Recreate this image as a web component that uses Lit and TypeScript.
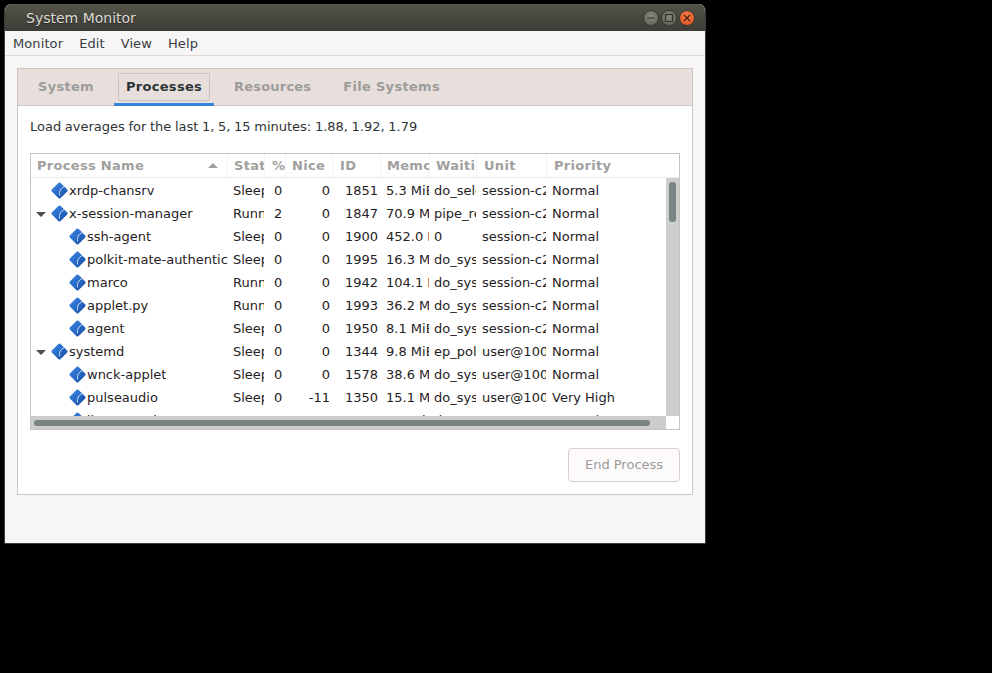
import { LitElement, html, css, svg } from 'lit';
import { customElement } from 'lit/decorators.js';

type Row = {
  name: string;
  level: number;
  open?: boolean;
  cells: string[];
};

const rows: Row[] = [
  { name: 'xrdp-chansrv', level: 0, cells: ['Sleeping', '0', '0', '1851', '5.3 MiB', 'do_select', 'session-c2.scope', 'Normal'] },
  { name: 'x-session-manager', level: 0, open: true, cells: ['Running', '2', '0', '1847', '70.9 MiB', 'pipe_read', 'session-c2.scope', 'Normal'] },
  { name: 'ssh-agent', level: 1, cells: ['Sleeping', '0', '0', '1900', '452.0 KiB', '0', 'session-c2.scope', 'Normal'] },
  { name: 'polkit-mate-authentication-agent-1', level: 1, cells: ['Sleeping', '0', '0', '1995', '16.3 MiB', 'do_sys_poll', 'session-c2.scope', 'Normal'] },
  { name: 'marco', level: 1, cells: ['Running', '0', '0', '1942', '104.1 MiB', 'do_sys_poll', 'session-c2.scope', 'Normal'] },
  { name: 'applet.py', level: 1, cells: ['Running', '0', '0', '1993', '36.2 MiB', 'do_sys_poll', 'session-c2.scope', 'Normal'] },
  { name: 'agent', level: 1, cells: ['Sleeping', '0', '0', '1950', '8.1 MiB', 'do_sys_poll', 'session-c2.scope', 'Normal'] },
  { name: 'systemd', level: 0, open: true, cells: ['Sleeping', '0', '0', '1344', '9.8 MiB', 'ep_poll', 'user@1000.service', 'Normal'] },
  { name: 'wnck-applet', level: 1, cells: ['Sleeping', '0', '0', '1578', '38.6 MiB', 'do_sys_poll', 'user@1000.service', 'Normal'] },
  { name: 'pulseaudio', level: 1, cells: ['Sleeping', '0', '-11', '1350', '15.1 MiB', 'do_sys_poll', 'user@1000.service', 'Very High'] },
  { name: 'ibus-portal', level: 1, cells: ['Running', '0', '0', '1600', '9.9 MiB', 'do_sys_poll', 'user@1000.service', 'Normal'] },
];

const headers = ['Stat', '%', 'Nice', 'ID', 'Memory', 'Waiting', 'Unit', 'Priority'];

const diamond = svg`<svg class="icon" width="17" height="17" viewBox="0 0 17 17">
  <defs>
    <linearGradient id="dia" x1="0" y1="0" x2="1" y2="1">
      <stop offset="0" stop-color="#3f8ae6"/>
      <stop offset="0.55" stop-color="#2667c4"/>
      <stop offset="1" stop-color="#174c9c"/>
    </linearGradient>
  </defs>
  <path d="M7.6 .8 Q8.5 0 9.4 .8 L16.2 7.6 Q17 8.5 16.2 9.4 L9.4 16.2 Q8.5 17 7.6 16.2 L.8 9.4 Q0 8.5 .8 7.6 Z" fill="url(#dia)"/>
  <path d="M13 4.8 C9.8 6 7.8 9.2 8.6 13.4" fill="none" stroke="#cfe0f6" stroke-width="1"/>
</svg>`;

@customElement('app-root')
export class AppRoot extends LitElement {
  static styles = css`
    :host {
      display: block;
      height: 673px;
      background: #000;
      font-family: 'DejaVu Sans', sans-serif;
      font-size: 13px;
      color: #2e3436;
      padding: 4px 0 0 4px;
      box-sizing: border-box;
    }
    .window {
      width: 702px;
      height: 540px;
      background: #f6f6f6;
      border-radius: 7px 7px 0 0;
      border: 1px solid #3c3c3c;
      border-top: none;
      overflow: hidden;
      display: flex;
      flex-direction: column;
      box-sizing: border-box;
    }
    .titlebar {
      height: 27px;
      flex: none;
      background: linear-gradient(#55544a, #3d3c36);
      display: flex;
      align-items: center;
      padding: 0 10px 0 21px;
      color: #dfdbd2;
      font-size: 14px;
      text-shadow: 0 1px 1px #222;
    }
    .title { flex: 1; }
    .wbtns { display: flex; gap: 2px; }
    .wbtn {
      width: 16px;
      height: 16px;
      box-sizing: border-box;
      border-radius: 50%;
      background: radial-gradient(circle at 50% 35%, #87877f, #5f5f58);
      border: 1px solid #3a3a34;
      display: flex;
      align-items: center;
      justify-content: center;
    }
    .wbtn.close { background: radial-gradient(circle at 50% 35%, #f47a48, #e0501d); }
    .menubar {
      height: 24px;
      flex: none;
      border-bottom: 1px solid #dcdad8;
      display: flex;
      align-items: center;
      padding: 0 8px;
      gap: 16px;
      font-size: 13px;
      letter-spacing: 0.1px;
      color: #3a3d3f;
    }
    .content {
      flex: 1;
      min-height: 0;
      padding: 12px 12px 48px;
      display: flex;
    }
    .notebook {
      flex: 1;
      border: 1px solid #cdc7c2;
      background: #fff;
      display: flex;
      flex-direction: column;
    }
    .tabs {
      height: 36px;
      flex: none;
      background: #e8dfdd;
      border-bottom: 1px solid #cdc7c2;
      display: flex;
      padding-left: 4px;
    }
    .tab {
      padding: 0 16px 2px;
      height: 36px;
      box-sizing: border-box;
      display: flex;
      align-items: center;
      font-weight: bold;
      font-size: 13px;
      letter-spacing: 0.3px;
      color: #9c9c9a;
      position: relative;
    }
    .tab:nth-child(3) { letter-spacing: 0.2px; }
    .tab.active { color: #2e3436; padding: 0 4px 2px; margin: 0 4px; }
    .tab.active span {
      border: 1px dotted #a8a8a6;
      border-radius: 2px;
      margin-top: 2px;
      padding: 4px 7px 5px;
      line-height: 17px;
    }
    .tab.active::after {
      content: '';
      position: absolute;
      left: 0;
      right: 0;
      bottom: -1px;
      height: 3px;
      background: #3584e4;
    }
    .page {
      flex: 1;
      padding: 13px 12px 12px;
      display: flex;
      flex-direction: column;
    }
    .load { height: 16px; line-height: 16px; color: #2e3436; font-size: 13px; word-spacing: -0.5px; }
    .tree {
      margin-top: 18px;
      height: 277px;
      flex: none;
      border: 1px solid #c8c4c0;
      display: grid;
      grid-template-columns: 1fr 13px;
      grid-template-rows: 24px 1fr 13px;
      box-sizing: border-box;
      overflow: hidden;
      background: #fff;
    }
    .list { overflow: hidden; min-width: 0; min-height: 0; }
    .cols {
      display: grid;
      grid-template-columns: 197px 37px 21px 47px 48px 49px 47px 70px 1fr;
    }
    .head {
      grid-column: 1 / -1;
      border-bottom: 1px solid #eeecea;
      box-sizing: border-box;
    }
    .head > div {
      font-weight: bold;
      font-size: 13px;
      letter-spacing: 0.3px;
      color: #a0a09e;
      line-height: 23px;
      padding-left: 6px;
      border-right: 1px solid #f4f3f2;
      overflow: hidden;
      white-space: nowrap;
      display: flex;
      justify-content: space-between;
      box-sizing: border-box;
    }
    .head > div:nth-child(3),
    .head > div:nth-child(5),
    .head > div:nth-child(8),
    .head > div:nth-child(9) { padding-left: 7px; }
    .head > div:last-child { border-right: none; }
    .sort { margin: 9px 9px 0 0; width: 0; height: 0; border: 5px solid transparent; border-top: 0; border-bottom: 5px solid #a0a09e; }
    .body { padding-top: 1px; }
    .row { height: 23px; line-height: 23px; color: #1f2224; white-space: nowrap; }
    .row > div { overflow: hidden; box-sizing: border-box; }
    .row .namecell { display: flex; align-items: center; padding-left: 1px; }
    .row .right { text-align: right; margin-right: 3px; }
    .row > .stat { padding-left: 5px; margin-right: 1px; }
    .row > .pctv { padding-left: 9px; }
    .row > .mem { padding-left: 5px; margin-right: 1px; }
    .row > .wait { padding-left: 4px; margin-right: 1px; }
    .row > .unit { padding-left: 5px; margin-right: 1px; }
    .row > .prio { padding-left: 5px; }
    .twist { width: 18px; flex: none; display: flex; justify-content: center; }
    .twist i { margin-top: 1px; width: 0; height: 0; border: 5px solid transparent; border-bottom: 0; border-top: 5px solid #4a4d4f; }
    .indent { width: 18px; flex: none; }
    .icon { flex: none; margin-left: 1px; }
    .name { margin-left: 1px; overflow: hidden; }
    .vscroll { background: #cdcdcd; display: flex; justify-content: center; padding-top: 4px; box-sizing: border-box; }
    .vscroll i { display: block; width: 7px; height: 40px; background: #7b8484; border-radius: 3px; }
    .hscroll { background: #cdcdcd; display: flex; align-items: center; padding-left: 3px; box-sizing: border-box; }
    .hscroll i { display: block; width: 616px; height: 6px; background: #7b8484; border-radius: 3px; }
    .corner { background: #fff; }
    .actions { display: flex; justify-content: flex-end; margin-top: 18px; }
    button {
      width: 112px;
      height: 34px;
      font: inherit;
      font-size: 13px;
      color: #9a9a98;
      background: #fdfafc;
      border: 1px solid #d8cfcc;
      border-radius: 4px;
      padding: 0 0 2px;
    }
  `;

  renderRow(r: Row) {
    const c = r.cells;
    return html`<div class="row cols">
      <div class="namecell">
        ${r.level ? html`<span class="indent"></span>` : ''}
        <span class="twist">${r.open ? html`<i></i>` : ''}</span>
        ${diamond}
        <span class="name">${r.name}</span>
      </div>
      <div class="stat">${c[0]}</div>
      <div class="pctv">${c[1]}</div>
      <div class="right">${c[2]}</div>
      <div class="right">${c[3]}</div>
      <div class="mem">${c[4]}</div>
      <div class="wait">${c[5]}</div>
      <div class="unit">${c[6]}</div>
      <div class="prio">${c[7]}</div>
    </div>`;
  }

  render() {
    return html`<div class="window">
      <div class="titlebar">
        <div class="title">System Monitor</div>
        <div class="wbtns">
          <div class="wbtn"><svg width="10" height="10" viewBox="0 0 10 10"><path d="M1.5 5h7" stroke="#33332e" stroke-width="1.2"/></svg></div>
          <div class="wbtn"><svg width="10" height="10" viewBox="0 0 10 10"><rect x="1.5" y="1.5" width="7" height="7" fill="none" stroke="#33332e" stroke-width="1.2"/></svg></div>
          <div class="wbtn close"><svg width="10" height="10" viewBox="0 0 10 10"><path d="M2 2l6 6M8 2l-6 6" stroke="#4a2412" stroke-width="1.3"/></svg></div>
        </div>
      </div>
      <div class="menubar">
        <span>Monitor</span><span>Edit</span><span>View</span><span>Help</span>
      </div>
      <div class="content">
        <div class="notebook">
          <div class="tabs">
            <div class="tab">System</div>
            <div class="tab active"><span>Processes</span></div>
            <div class="tab">Resources</div>
            <div class="tab">File Systems</div>
          </div>
          <div class="page">
            <div class="load">Load averages for the last 1, 5, 15 minutes: 1.88, 1.92, 1.79</div>
            <div class="tree">
              <div class="cols head">
                <div>Process Name<span class="sort"></span></div>
                ${headers.map((h) => html`<div>${h}</div>`)}
              </div>
              <div class="list">
                <div class="body">${rows.map((r) => this.renderRow(r))}</div>
              </div>
              <div class="vscroll"><i></i></div>
              <div class="hscroll"><i></i></div>
              <div class="corner"></div>
            </div>
            <div class="actions"><button disabled>End Process</button></div>
          </div>
        </div>
      </div>
    </div>`;
  }
}
